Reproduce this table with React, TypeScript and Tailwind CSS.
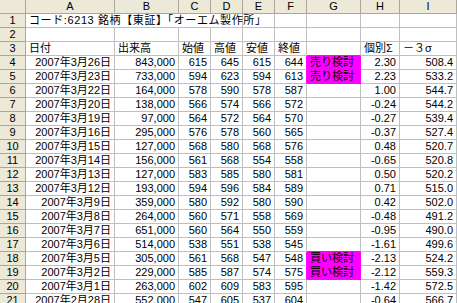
const COLS = ["A", "B", "C", "D", "E", "F", "G", "H", "I"];

type Row = [string, string, string, string, string, string, string, string, string];

const data: Row[] = [
  ["2007年3月26日", "843,000", "615", "645", "615", "644", "売り検討", "2.30", "508.4"],
  ["2007年3月23日", "733,000", "594", "623", "594", "613", "売り検討", "2.23", "533.2"],
  ["2007年3月22日", "164,000", "578", "590", "578", "587", "", "1.00", "544.7"],
  ["2007年3月20日", "138,000", "566", "574", "566", "572", "", "-0.24", "544.2"],
  ["2007年3月19日", "97,000", "564", "572", "564", "570", "", "-0.27", "539.4"],
  ["2007年3月16日", "295,000", "576", "578", "560", "565", "", "-0.37", "527.4"],
  ["2007年3月15日", "127,000", "568", "580", "568", "576", "", "0.48", "520.7"],
  ["2007年3月14日", "156,000", "561", "568", "554", "558", "", "-0.65", "520.8"],
  ["2007年3月13日", "127,000", "583", "585", "580", "581", "", "0.50", "520.2"],
  ["2007年3月12日", "193,000", "594", "596", "584", "589", "", "0.71", "515.0"],
  ["2007年3月9日", "359,000", "580", "592", "580", "590", "", "0.42", "502.0"],
  ["2007年3月8日", "264,000", "560", "571", "558", "569", "", "-0.48", "491.2"],
  ["2007年3月7日", "651,000", "560", "564", "550", "559", "", "-0.95", "490.0"],
  ["2007年3月6日", "514,000", "538", "551", "538", "545", "", "-1.61", "499.6"],
  ["2007年3月5日", "305,000", "561", "568", "547", "548", "買い検討", "-2.13", "524.2"],
  ["2007年3月2日", "229,000", "585", "587", "574", "575", "買い検討", "-2.12", "559.3"],
  ["2007年3月1日", "263,000", "602", "609", "583", "595", "", "-1.42", "572.5"],
  ["2007年2月28日", "552,000", "547", "605", "537", "604", "", "-0.64", "566.7"],
];

const headCell = "h-[14px] bg-[#ece9d8] border-r border-b border-[#aca899] text-center leading-[13px]";
const cell = "h-[14px] border-r border-b border-[#c0c0c0] px-[3px] leading-[13px] whitespace-nowrap";

function RowHead({ n }: { n: number }) {
  return <div className={headCell}>{n}</div>;
}

export default function App() {
  return (
    <div
      className="w-[457px] h-[303px] overflow-hidden bg-white text-black text-[11px]"
      style={{ fontFamily: '"Liberation Sans", "Noto Sans CJK JP", sans-serif' }}
    >
      <div className="grid grid-cols-[26px_89px_64px_32px_32px_32px_32px_54px_39px_57px]">
        {/* column headers */}
        <div className={headCell}></div>
        {COLS.map((c) => (
          <div key={c} className={headCell}>
            {c}
          </div>
        ))}

        {/* row 1: title overflows across A-D */}
        <RowHead n={1} />
        <div className={`${cell} col-span-4 px-[2px] text-left tracking-[0.6px]`}>
          コード:6213 銘柄【東証】「オーエム製作所」
        </div>
        {[0, 1, 2, 3, 4].map((i) => (
          <div key={i} className={cell}></div>
        ))}

        {/* row 2 */}
        <RowHead n={2} />
        {COLS.map((c) => (
          <div key={c} className={cell}></div>
        ))}

        {/* row 3 */}
        <RowHead n={3} />
        <div className={`${cell} px-[2px]`}>日付</div>
        <div className={`${cell} px-[2px]`}>出来高</div>
        <div className={`${cell} px-[2px]`}>始値</div>
        <div className={`${cell} px-[2px]`}>高値</div>
        <div className={`${cell} px-[2px]`}>安値</div>
        <div className={`${cell} px-[2px]`}>終値</div>
        <div className={`${cell} ${data[0][6] ? "border-b-[#ff00ff]" : ""}`}></div>
        <div className={`${cell} px-[2px]`}>個別Σ</div>
        <div className={`${cell} px-[2px]`}>－３σ</div>

        {data.map((r, i) => {
          const flag = r[6] !== "";
          const nextFlag = i + 1 < data.length && data[i + 1][6] !== "";
          return [
            <RowHead key={`h${i}`} n={i + 4} />,
            ...r.map((v, j) =>
              j === 6 ? (
                <div
                  key={j}
                  className={`${cell} ${flag ? "bg-[#ff00ff] border-[#ff00ff]" : ""} ${
                    !flag && nextFlag ? "border-b-[#ff00ff]" : ""
                  } px-[2px] text-left`}
                >
                  {v}
                </div>
              ) : (
                <div
                  key={j}
                  className={`${cell} text-right ${j === 5 && flag ? "border-r-[#ff00ff]" : ""}`}
                >
                  {v}
                </div>
              )
            ),
          ];
        })}
      </div>
    </div>
  );
}
